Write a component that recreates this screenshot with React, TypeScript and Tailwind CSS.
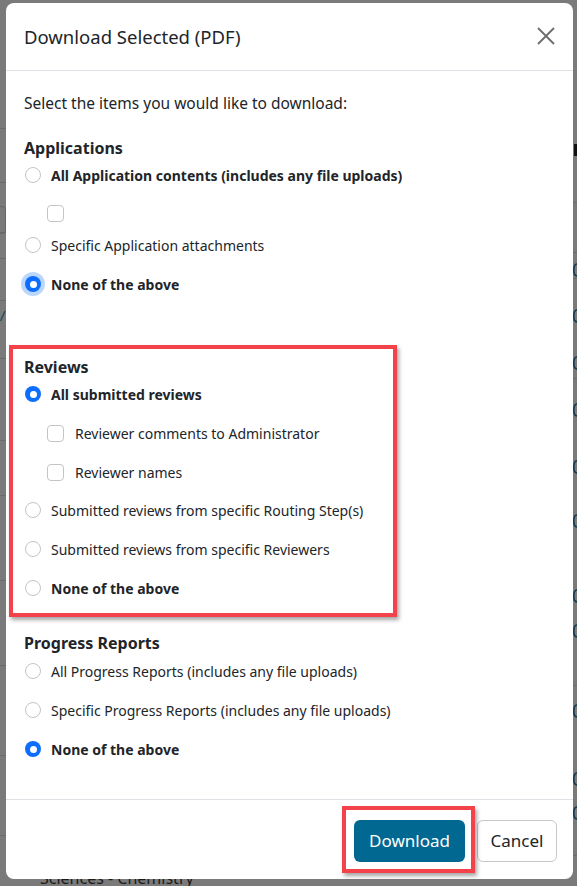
import React from "react";

const font = { fontFamily: '"Noto Sans", "Open Sans", Arial, sans-serif' };

function Radio({ checked, focus }: { checked?: boolean; focus?: boolean }) {
  if (checked) {
    return (
      <span
        className={
          "flex h-[16px] w-[16px] shrink-0 items-center justify-center rounded-full bg-[#0d6efd] " +
          (focus ? "shadow-[0_0_0_4px_rgba(13,110,253,0.28)]" : "")
        }
      >
        <span className="h-[7px] w-[7px] rounded-full bg-white" />
      </span>
    );
  }
  return <span className="h-[16px] w-[16px] shrink-0 rounded-full border border-[#c4c4c4] bg-white" />;
}

function Check() {
  return <span className="h-[17px] w-[17px] shrink-0 rounded-[4px] border border-[#c4c4c4] bg-white" />;
}

function RadioRow({
  label,
  bold,
  checked,
  focus,
  mt,
}: {
  label: string;
  bold?: boolean;
  checked?: boolean;
  focus?: boolean;
  mt: string;
}) {
  return (
    <div className={"flex h-[24px] items-center pl-[1px] " + mt}>
      <Radio checked={checked} focus={focus} />
      <span
        className={
          "ml-[10px] whitespace-nowrap text-[14px] text-[#212529] " + (bold ? "font-bold" : "font-normal")
        }
      >
        {label}
      </span>
    </div>
  );
}

function CheckRow({ label, mt }: { label: string; mt: string }) {
  return (
    <div className={"flex h-[24px] items-center pl-[23px] " + mt}>
      <Check />
      <span className="ml-[11px] whitespace-nowrap text-[14px] text-[#212529]">{label}</span>
    </div>
  );
}

function Heading({ children, mt }: { children: React.ReactNode; mt: string }) {
  return <div className={"h-[24px] text-[16px] font-bold leading-[24px] text-[#212529] " + mt}>{children}</div>;
}

export default function App() {
  const lineYs = [128, 182, 232, 258, 300, 358, 440, 495, 580, 665, 755, 835];
  const parenYs = [270, 316, 363, 410, 467, 521, 596, 631, 711, 779, 813];
  return (
    <div className="relative h-[886px] w-[577px] overflow-hidden bg-[#7a7a7a]" style={font}>
      {/* dimmed background page */}
      {lineYs.map((y) => (
        <div key={"l" + y} className="absolute left-0 h-px w-[6px] bg-[#6b6b6b]" style={{ top: y }} />
      ))}
      {lineYs.map((y) => (
        <div key={"r" + y} className="absolute right-0 h-px w-[4px] bg-[#6b6b6b]" style={{ top: y + 20 }} />
      ))}
      <div className="absolute left-[-3px] top-[206px] h-[28px] w-[9px] rounded-[4px] border border-[#666]" />
      <svg className="absolute left-0 top-[309px]" width="6" height="16" viewBox="0 0 6 16">
        <path d="M0.5 12 L5 2" stroke="#1c4a5c" strokeWidth="1.3" fill="none" />
      </svg>
      <div className="absolute right-0 top-[144px] h-[12px] w-[3px] bg-[#111]" />
      {parenYs.map((y) => (
        <svg key={"p" + y} className="absolute right-0" style={{ top: y - 7 }} width="4" height="14" viewBox="0 0 4 14">
          <path d="M4 1 Q0.8 1 0.8 7 Q0.8 13 4 13" stroke="#14364c" strokeWidth="1.6" fill="none" />
        </svg>
      ))}
      <span className="absolute left-[40px] top-[870px] text-[16px] leading-none text-[#1a1a1a]">Sciences - Chemistry</span>

      {/* modal */}
      <div className="absolute left-[6px] top-[3px] flex h-[876px] w-[567px] flex-col rounded-[8px] bg-white">
        <div className="flex h-[68px] shrink-0 items-center justify-between border-b border-[#dee2e6] pl-[18px] pr-[16px]">
          <span className="text-[18.5px] leading-[28px] text-[#212529]">Download Selected (PDF)</span>
          <svg width="20" height="20" viewBox="0 0 20 20" className="mr-[1px] mt-[-2px]">
            <path d="M2 2 L18 18 M18 2 L2 18" stroke="#6c6c6c" strokeWidth="1.8" fill="none" />
          </svg>
        </div>

        <div className="flex flex-1 flex-col pl-[18px] pt-[20px]">
          <div className="h-[24px] text-[15.5px] leading-[24px] text-[#212529]">Select the items you would like to download:</div>

          <Heading mt="mt-[21px]">Applications</Heading>
          <RadioRow mt="mt-[3px]" bold label="All Application contents (includes any file uploads)" />
          <div className="mt-[14px] flex h-[24px] items-center pl-[23px]">
            <Check />
          </div>
          <RadioRow mt="mt-[8px]" label="Specific Application attachments" />
          <RadioRow mt="mt-[15px]" bold checked focus label="None of the above" />

          <Heading mt="mt-[59px]">Reviews</Heading>
          <RadioRow mt="mt-[3px]" bold checked label="All submitted reviews" />
          <CheckRow mt="mt-[15px]" label="Reviewer comments to Administrator" />
          <CheckRow mt="mt-[15px]" label="Reviewer names" />
          <RadioRow mt="mt-[14px]" label="Submitted reviews from specific Routing Step(s)" />
          <RadioRow mt="mt-[15px]" label="Submitted reviews from specific Reviewers" />
          <RadioRow mt="mt-[15px]" bold label="None of the above" />

          <Heading mt="mt-[31px]">Progress Reports</Heading>
          <RadioRow mt="mt-[4px]" label="All Progress Reports (includes any file uploads)" />
          <RadioRow mt="mt-[15px]" label="Specific Progress Reports (includes any file uploads)" />
          <RadioRow mt="mt-[15px]" bold checked label="None of the above" />
        </div>

        <div className="flex h-[80px] shrink-0 items-center justify-end gap-[12px] border-t border-[#dee2e6] pr-[16px] pt-[2px]">
          <button className="h-[42px] w-[111px] rounded-[6px] bg-[#016892] text-[17px] text-white">Download</button>
          <button className="h-[42px] w-[80px] rounded-[6px] border border-[#c8c8c8] bg-white text-[17px] text-[#212529]">
            Cancel
          </button>
        </div>
      </div>

      {/* annotation frames */}
      <div className="pointer-events-none absolute left-[9px] top-[345px] h-[272px] w-[388px] border-[4px] border-[#f4424a] shadow-[2px_3px_4px_rgba(0,0,0,0.35)]" />
      <div className="pointer-events-none absolute left-[342px] top-[806px] h-[67px] w-[133px] border-[4px] border-[#f4424a] shadow-[2px_3px_4px_rgba(0,0,0,0.35)]" />
    </div>
  );
}
